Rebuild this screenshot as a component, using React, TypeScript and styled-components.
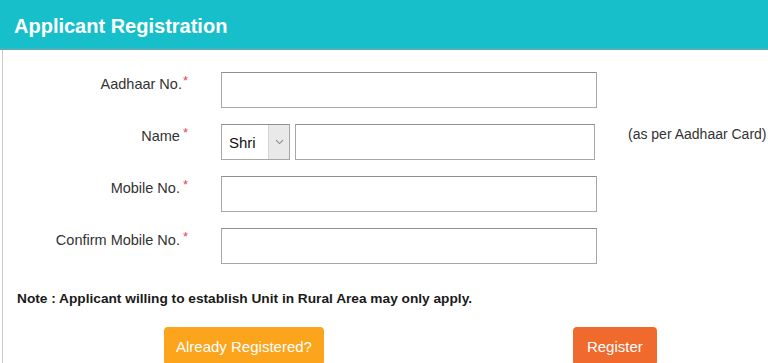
import React from "react";
import styled, { createGlobalStyle } from "styled-components";

const GlobalStyle = createGlobalStyle`
  html, body {
    margin: 0;
    padding: 0;
    background: #ffffff;
  }
  body {
    font-family: "Liberation Sans", Arial, sans-serif;
    color: #333333;
  }
`;

const Page = styled.div`
  width: 768px;
  height: 363px;
  overflow: hidden;
`;

const Header = styled.div`
  height: 48px;
  background-color: #17bfca;
  border-bottom: 2px solid #4cb2ba;
  display: flex;
  align-items: center;
  padding-left: 14px;
`;

const Title = styled.h2`
  margin: 0;
  font-size: 20px;
  font-weight: 700;
  color: #ffffff;
  padding-top: 5px;
`;

const Body = styled.div`
  margin-left: 2px;
  border-left: 1px solid #cccccc;
  padding-top: 22px;
  height: 313px;
  box-sizing: border-box;
`;

const Form = styled.div`
  display: grid;
  grid-template-columns: 187px 376px auto;
  column-gap: 31px;
  row-gap: 16px;
  align-items: start;
`;

const Label = styled.label`
  text-align: right;
  font-size: 14.5px;
  line-height: 18px;
  padding-top: 3px;
  padding-right: 2px;
  color: #333333;
  white-space: nowrap;
`;

const Star = styled.span<{ $spaced?: boolean }>`
  color: #e0485e;
  font-size: 13px;
  line-height: 12px;
  vertical-align: top;
  margin-left: ${(p) => (p.$spaced ? "3px" : "1px")};
`;

const TextInput = styled.input<{ $width?: number }>`
  box-sizing: border-box;
  width: ${(p) => (p.$width ? `${p.$width}px` : "100%")};
  height: 36px;
  margin: 0;
  border: 1px solid #a7a7a7;
  border-top-color: #8f8f8f;
  background: #ffffff;
  font-family: inherit;
  font-size: 15px;
  padding: 0 8px;
  outline: none;
`;

const NameGroup = styled.div`
  display: flex;
  gap: 5px;
`;

const SelectBox = styled.div`
  box-sizing: border-box;
  width: 69px;
  height: 36px;
  border: 1px solid #a7a7a7;
  border-top-color: #8f8f8f;
  display: flex;
  align-items: stretch;
  background: #ffffff;
`;

const SelectValue = styled.span`
  flex: 1;
  display: flex;
  align-items: center;
  padding-left: 7px;
  font-size: 15px;
  color: #111111;
`;

const SelectArrow = styled.span`
  width: 20px;
  background: #e9e9e9;
  border-left: 1px solid #d4d4d4;
  display: flex;
  align-items: center;
  justify-content: center;
`;

const Hint = styled.span`
  font-size: 14px;
  line-height: 18px;
  padding-top: 1px;
  color: #333333;
  white-space: nowrap;
`;

const Note = styled.p`
  margin: 27px 0 0 14px;
  font-size: 13.7px;
  line-height: 16px;
  font-weight: 700;
  color: #1a1a1a;
`;

const ButtonRow = styled.div`
  display: flex;
  margin-top: 20px;
  padding-left: 161px;
  gap: 249px;
`;

const Button = styled.button<{ $tone: "amber" | "orange" }>`
  height: 38px;
  border: none;
  border-radius: 4px;
  padding: 0 ${(p) => (p.$tone === "amber" ? "12px" : "14px")};
  background-color: ${(p) => (p.$tone === "amber" ? "#fda41d" : "#ef6a2c")};
  color: #ffffff;
  font-family: inherit;
  font-size: 15px;
  cursor: pointer;
`;

const Chevron = () => (
  <svg width="9" height="6" viewBox="0 0 9 6" fill="none">
    <path d="M1 1.2 L4.5 4.6 L8 1.2" stroke="#8a8a8a" strokeWidth="1.1" />
  </svg>
);

export default function App() {
  return (
    <Page>
      <GlobalStyle />
      <Header>
        <Title>Applicant Registration</Title>
      </Header>
      <Body>
        <Form>
          <Label>
            Aadhaar No.<Star>*</Star>
          </Label>
          <TextInput $width={376} />
          <span />

          <Label>
            Name<Star $spaced>*</Star>
          </Label>
          <NameGroup>
            <SelectBox>
              <SelectValue>Shri</SelectValue>
              <SelectArrow>
                <Chevron />
              </SelectArrow>
            </SelectBox>
            <TextInput $width={300} />
          </NameGroup>
          <Hint>(as per Aadhaar Card)</Hint>

          <Label>
            Mobile No.<Star $spaced>*</Star>
          </Label>
          <TextInput $width={376} />
          <span />

          <Label>
            Confirm Mobile No.<Star $spaced>*</Star>
          </Label>
          <TextInput $width={376} />
          <span />
        </Form>
        <Note>Note : Applicant willing to establish Unit in Rural Area may only apply.</Note>
        <ButtonRow>
          <Button $tone="amber">Already Registered?</Button>
          <Button $tone="orange">Register</Button>
        </ButtonRow>
      </Body>
    </Page>
  );
}
